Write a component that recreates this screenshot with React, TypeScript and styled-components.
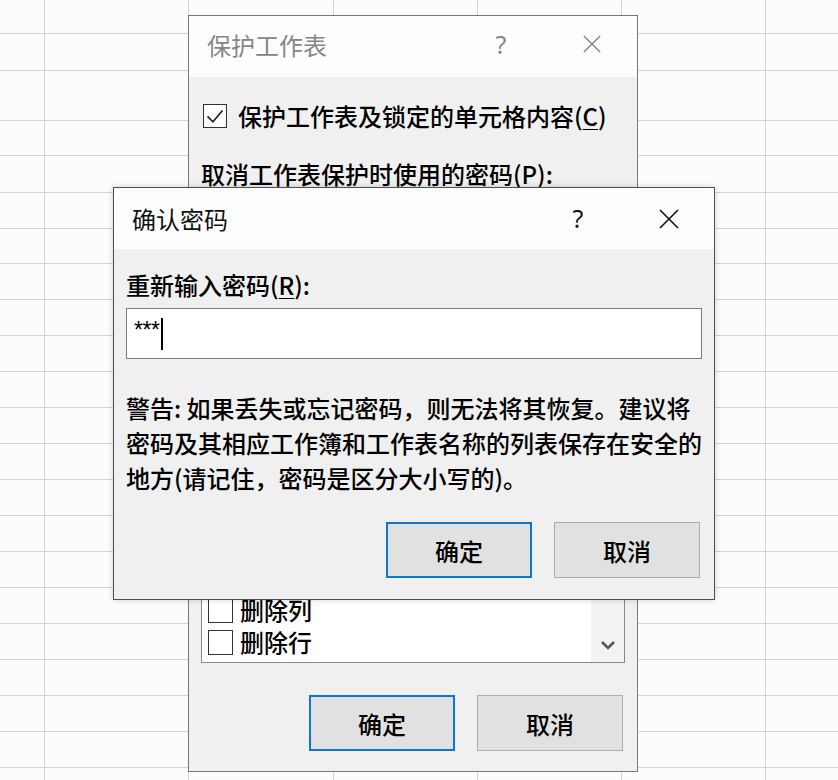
import React from "react";
import styled, { createGlobalStyle } from "styled-components";

const GlobalStyle = createGlobalStyle`
  html, body {
    margin: 0;
    padding: 0;
    background: #fcfcfd;
  }
  body {
    font-family: "Noto Sans CJK SC", "Noto Sans", sans-serif;
    color: #000;
  }
`;

// column / row sizes of the worksheet behind the dialogs
const COLS = [45, 144, 145, 144, 144, 144, 76];
const ROWS = [34, 37, 50, 35, 37, 36, 35, ...Array(15).fill(36)];

const Desktop = styled.div`
  position: relative;
  width: 838px;
  height: 780px;
  overflow: hidden;
  background: #fcfcfd;
`;

const Sheet = styled.div`
  display: grid;
  grid-template-columns: ${COLS.map((c) => `${c}px`).join(" ")};
  grid-template-rows: ${ROWS.map((r) => `${r}px`).join(" ")};
`;

const Cell = styled.div`
  box-sizing: border-box;
  border-right: 1px solid #d3d3d7;
  border-bottom: 1px solid #d3d3d7;
`;

const Window = styled.div<{ $x: number; $y: number; $w: number; $h: number; $active?: boolean }>`
  position: absolute;
  left: ${(p) => p.$x}px;
  top: ${(p) => p.$y}px;
  width: ${(p) => p.$w}px;
  height: ${(p) => p.$h}px;
  box-sizing: border-box;
  display: flex;
  flex-direction: column;
  background: #f0f0f0;
  border: 1px solid ${(p) => (p.$active ? "#4f4f53" : "#77777b")};
  box-shadow: ${(p) => (p.$active ? "0 0 6px rgba(0,0,0,0.18)" : "none")};
`;

const TitleBar = styled.div<{ $lift?: number }>`
  height: 61px;
  box-sizing: border-box;
  flex: none;
  display: flex;
  align-items: center;
  background: #fdfdfe;
  padding-left: 18px;
  padding-bottom: ${(p) => p.$lift ?? 0}px;
`;

const Title = styled.div<{ $active?: boolean }>`
  flex: 1;
  font-size: 24px;
  line-height: 35px;
  color: ${(p) => (p.$active ? "#111" : "#858589")};
`;

const Help = styled.div<{ $active?: boolean }>`
  width: 40px;
  margin-right: 42px;
  text-align: center;
  font-family: "Noto Sans", sans-serif;
  font-size: 25px;
  line-height: 35px;
  color: ${(p) => (p.$active ? "#111" : "#858589")};
`;

const Close = styled.div<{ $active?: boolean }>`
  width: 58px;
  margin-right: 16px;
  display: flex;
  justify-content: center;
  align-items: center;
  color: ${(p) => (p.$active ? "#111" : "#858589")};
`;

const Body = styled.div<{ $top: number }>`
  flex: 1;
  display: flex;
  flex-direction: column;
  padding: ${(p) => p.$top}px 12px 20px 12px;
  min-height: 0;
  font-weight: 500;
`;

const CheckRow = styled.div`
  display: flex;
  align-items: center;
  gap: 11px;
  height: 35px;
  padding-left: 2px;
  font-size: 24px;
  line-height: 35px;
  white-space: nowrap;
`;

const Box = styled.span<{ $size: number }>`
  box-sizing: border-box;
  flex: none;
  width: ${(p) => p.$size}px;
  height: ${(p) => p.$size}px;
  border: 1.5px solid #333;
  background: #fff;
  display: flex;
  align-items: center;
  justify-content: center;
`;

const FieldLabel = styled.div<{ $gap?: number }>`
  font-size: 24px;
  line-height: 35px;
  height: 35px;
  margin-top: ${(p) => p.$gap ?? 0}px;
  white-space: nowrap;
`;

const Key = styled.span`
  text-decoration: underline;
  text-underline-offset: 3px;
  text-decoration-thickness: 1px;
`;

const TextBox = styled.div<{ $h: number; $gap: number }>`
  box-sizing: border-box;
  height: ${(p) => p.$h}px;
  margin-top: ${(p) => p.$gap}px;
  background: #fff;
  border: 1px solid #7a7a7a;
  display: flex;
  align-items: center;
  padding-left: 7px;
  flex: none;
`;

const Masked = styled.span`
  font-family: "Liberation Sans", sans-serif;
  font-weight: 400;
  font-size: 23px;
  line-height: 26px;
  letter-spacing: -0.5px;
  align-self: flex-start;
  margin-top: 8px;
`;

const Caret = styled.span`
  width: 2px;
  height: 32px;
  background: #000;
  margin-left: 2px;
`;

const Warning = styled.div`
  margin-top: 31px;
  font-size: 24px;
  white-space: nowrap;
`;

const WarningLine = styled.div`
  height: 35px;
  line-height: 35px;
`;

const ListBox = styled.div<{ $gap: number }>`
  flex: 1;
  min-height: 0;
  margin-top: ${(p) => p.$gap}px;
  box-sizing: border-box;
  border: 1px solid #828790;
  background: #fff;
  display: flex;
  overflow: hidden;
`;

const ListItems = styled.div`
  flex: 1;
  display: flex;
  flex-direction: column;
  justify-content: flex-end;
  padding: 0 0 4px 6px;
`;

const ListItem = styled.div`
  height: 32px;
  flex: none;
  display: flex;
  align-items: center;
  gap: 7px;
  font-size: 24px;
  line-height: 32px;
  white-space: nowrap;
`;

const ScrollTrack = styled.div`
  width: 33px;
  background: #f3f3f4;
  display: flex;
  flex-direction: column;
  justify-content: flex-end;
  align-items: center;
  padding-bottom: 12px;
`;

const ButtonRow = styled.div<{ $gap: number }>`
  display: flex;
  justify-content: flex-end;
  gap: 22px;
  padding-right: 2px;
  margin-top: ${(p) => p.$gap}px;
  flex: none;
`;

const Button = styled.button<{ $default?: boolean }>`
  box-sizing: border-box;
  width: 146px;
  height: 56px;
  background: #e1e1e1;
  border: ${(p) => (p.$default ? "2px solid #0a78d4" : "1px solid #adadad")};
  font-family: "Noto Sans CJK SC", sans-serif;
  font-weight: 500;
  font-size: 24px;
  color: #000;
  padding: 0;
`;

const CloseIcon = ({ size }: { size: number }) => (
  <svg width={size} height={size} viewBox="0 0 20 20">
    <path d="M1 1 L19 19 M19 1 L1 19" stroke="currentColor" strokeWidth="1.6" fill="none" />
  </svg>
);

const CheckMark = () => (
  <svg width="20" height="20" viewBox="0 0 24 24">
    <polyline points="3,12.5 9.5,19 21,5.5" stroke="#222" strokeWidth="2" fill="none" />
  </svg>
);

const Chevron = () => (
  <svg width="16" height="10" viewBox="0 0 16 10">
    <polyline points="2,2 8,8 14,2" stroke="#555" strokeWidth="2.6" fill="none" />
  </svg>
);

// only the rows still visible under the front dialog
const perms = ["删除列", "删除行"];

const warning = [
  "警告: 如果丢失或忘记密码，则无法将其恢复。建议将",
  "密码及其相应工作簿和工作表名称的列表保存在安全的",
  "地方(请记住，密码是区分大小写的)。",
];

const App = () => {
  const cells = COLS.length * ROWS.length;
  return (
    <>
      <GlobalStyle />
      <Desktop>
        <Sheet>
          {Array.from({ length: cells }).map((_, i) => (
            <Cell key={i} />
          ))}
        </Sheet>

        {/* 保护工作表 (inactive, behind) */}
        <Window $x={188} $y={15} $w={450} $h={757}>
          <TitleBar $lift={5}>
            <Title>保护工作表</Title>
            <Help>?</Help>
            <Close>
              <CloseIcon size={18} />
            </Close>
          </TitleBar>
          <Body $top={21}>
            <CheckRow>
              <Box $size={24}>
                <CheckMark />
              </Box>
              <span>
                保护工作表及锁定的单元格内容(<Key>C</Key>)
              </span>
            </CheckRow>
            <FieldLabel $gap={23}>
              取消工作表保护时使用的密码(<Key>P</Key>):
            </FieldLabel>
            <TextBox $h={44} $gap={8} />
            <ListBox $gap={67}>
              <ListItems>
                {perms.map((p) => (
                  <ListItem key={p}>
                    <Box $size={25} />
                    <span>{p}</span>
                  </ListItem>
                ))}
              </ListItems>
              <ScrollTrack>
                <Chevron />
              </ScrollTrack>
            </ListBox>
            <ButtonRow $gap={32}>
              <Button $default>确定</Button>
              <Button>取消</Button>
            </ButtonRow>
          </Body>
        </Window>

        {/* 确认密码 (active, front) */}
        <Window $x={113} $y={187} $w={602} $h={413} $active>
          <TitleBar>
            <Title $active>确认密码</Title>
            <Help $active>?</Help>
            <Close $active>
              <CloseIcon size={20} />
            </Close>
          </TitleBar>
          <Body $top={18}>
            <FieldLabel>
              重新输入密码(<Key>R</Key>):
            </FieldLabel>
            <TextBox $h={51} $gap={6}>
              <Masked>***</Masked>
              <Caret />
            </TextBox>
            <Warning>
              {warning.map((line) => (
                <WarningLine key={line}>{line}</WarningLine>
              ))}
            </Warning>
            <ButtonRow $gap={27}>
              <Button $default>确定</Button>
              <Button>取消</Button>
            </ButtonRow>
          </Body>
        </Window>
      </Desktop>
    </>
  );
};

export default App;
